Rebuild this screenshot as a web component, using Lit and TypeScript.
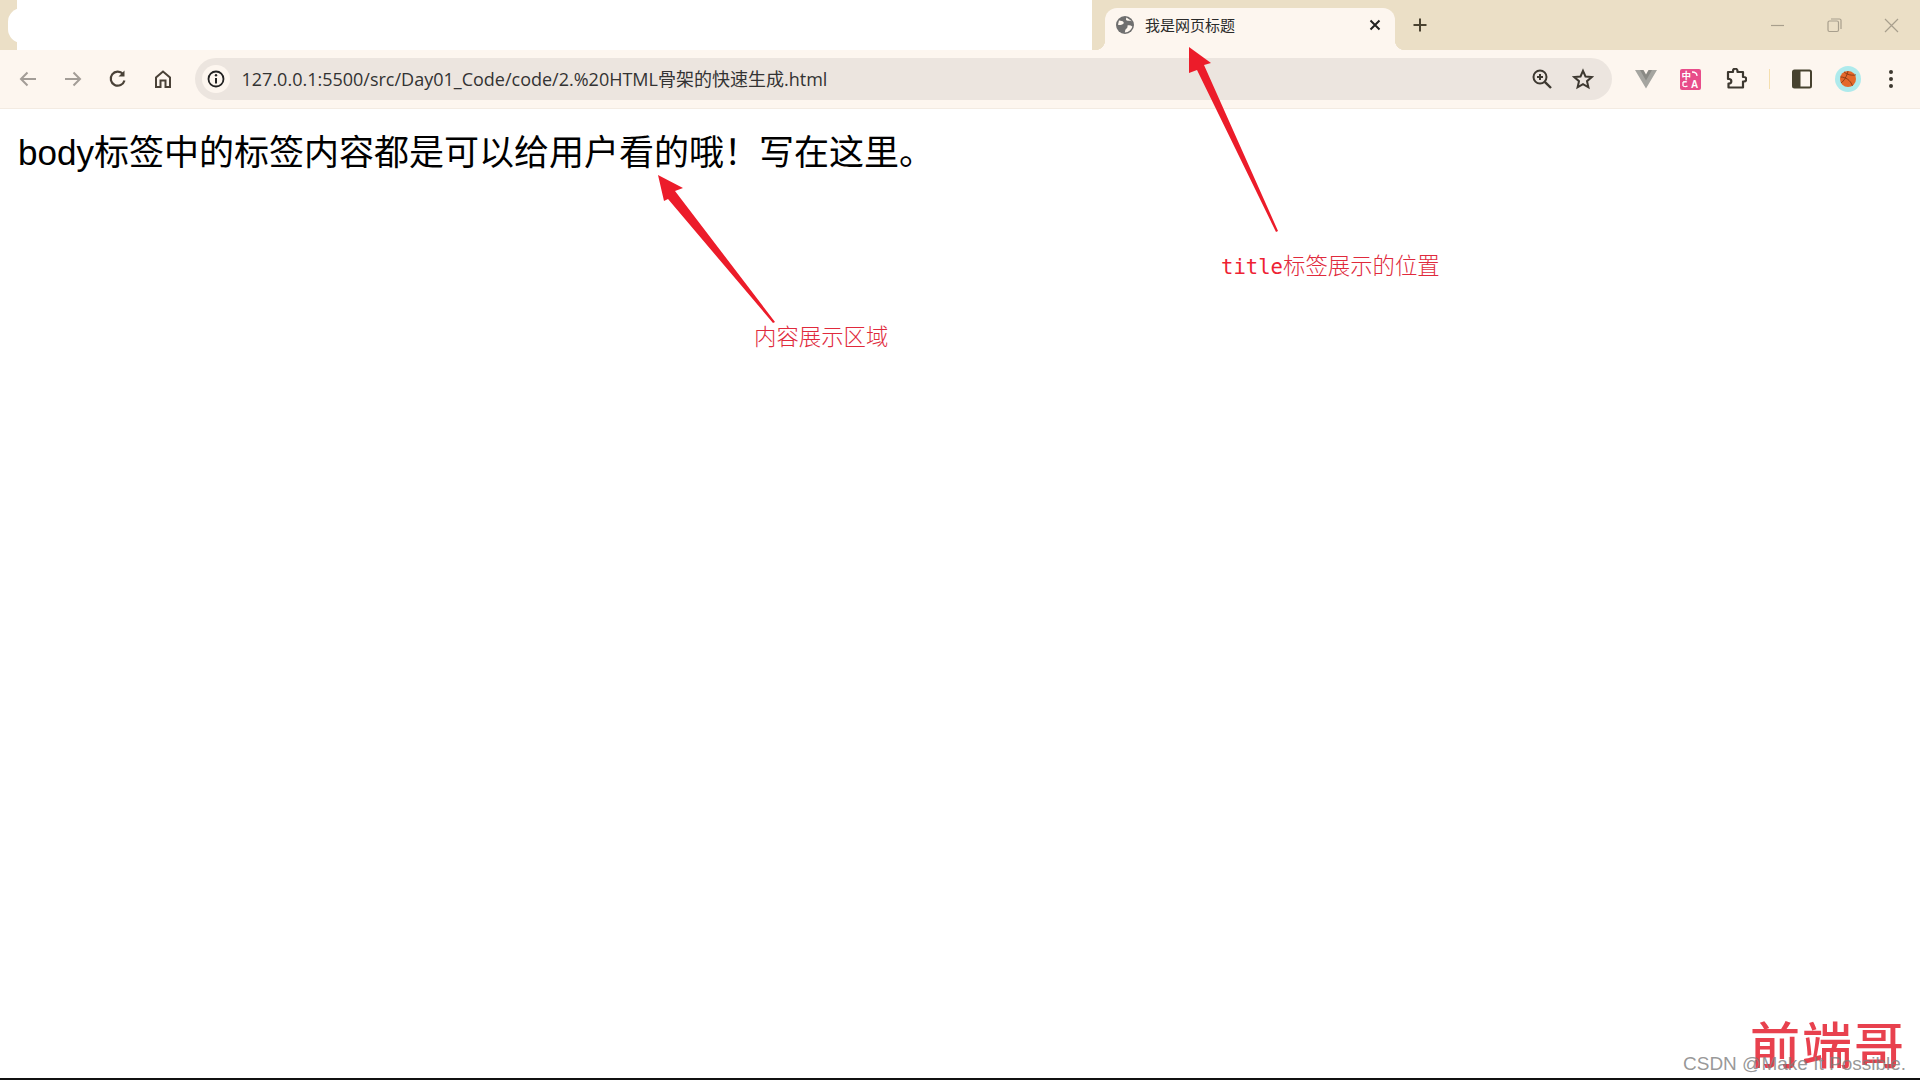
import { LitElement, html, css, svg } from "lit";
import { customElement } from "lit/decorators.js";

@customElement("app-root")
export class AppRoot extends LitElement {
  static styles = css`
    :host { display: block; width: 1920px; height: 1080px; position: relative; overflow: hidden; background: #fff; font-family: "Liberation Sans", "Noto Sans CJK SC", sans-serif; }
    .strip { height: 50px; background: #ebdfc6; display: flex; align-items: stretch; }
    .blank { width: 1075px; margin-left: 17px; background: #fff; flex: none; position: relative; }
    .blank::before { content: ""; position: absolute; left: -9px; top: 8px; width: 24px; height: 35px; background: #fff; border-radius: 14px 0 0 14px; }
    .tabzone { flex: none; width: 13px; }
    .tab { flex: none; width: 290px; margin-top: 8px; background: #fdf6ef; border-radius: 12px 12px 0 0; position: relative; display: flex; align-items: center; padding: 0 12px 8px 11px; box-sizing: border-box; height: 42px; }
    .tab::after { content: ""; position: absolute; right: -10px; bottom: 0; width: 10px; height: 10px; background: radial-gradient(circle at 100% 0, transparent 10px, #fdf6ef 10.5px); }
    .tab::before { content: ""; position: absolute; left: -10px; bottom: 0; width: 10px; height: 10px; background: radial-gradient(circle at 0 0, transparent 10px, #fdf6ef 10.5px); }
    .tab .fav { width: 18px; height: 18px; flex: none; }
    .tab .title { margin-left: 11px; font-size: 15px; line-height: 20px; color: #2a2a2a; flex: 1; font-family: "Noto Sans CJK SC", sans-serif; }
    .tab .x { width: 14px; height: 14px; flex: none; margin-right: 1px; }
    .plus { flex: none; width: 16px; height: 16px; margin: 17px 0 0 17px; }
    .spacer { flex: 1; }
    .winbtns { display: flex; flex: none; align-items: center; gap: 42px; padding-right: 21px; }
    .winbtns svg { width: 15px; height: 15px; flex: none; }
    .bar { height: 59px; box-sizing: border-box; background: #fdf6ef; border-bottom: 1px solid #f3ebe2; display: flex; align-items: center; padding: 0 0 0 18px; }
    .nav { width: 20px; height: 20px; flex: none; margin-right: 25px; }
    .nav:nth-of-type(4) { margin-right: 21.500px; }
    .omni { flex: none; width: 1417px; height: 42px; border-radius: 21px; background: #ece5df; display: flex; align-items: center; padding: 0 0 0 7px; box-sizing: border-box; }
    .info { width: 28px; height: 28px; border-radius: 50%; background: #fdf6ef; flex: none; display: flex; align-items: center; justify-content: center; }
    .info svg { width: 18px; height: 18px; }
    .url { margin: 0 0 2px 12px; font-size: 18px; color: #333; flex: 1; font-family: "Open Sans", "Noto Sans CJK SC", sans-serif; white-space: nowrap; }
    .omni-ico { width: 22px; height: 22px; flex: none; }
    .omni-ico.zoom { margin-right: 19px; }
    .omni-ico.star { margin-right: 18px; }
    .ext { flex: none; display: flex; align-items: center; margin-left: 23px; }
    .ext > * { flex: none; }
    .vue { width: 22px; height: 20px; }
    .tr { width: 21px; height: 21px; margin-left: 23px; }
    .puzzle { width: 22px; height: 22px; margin-left: 24px; }
    .sep { width: 1px; height: 20px; background: #f5dfae; margin-left: 22px; }
    .side { width: 20px; height: 20px; margin-left: 22px; }
    .avatar { width: 26px; height: 26px; margin-left: 23px; }
    .dots { width: 6px; height: 20px; margin-left: 27px; }
    .page { padding: 21px 18px; font-size: 35px; line-height: 46px; color: #000; font-family: "Liberation Sans", "Noto Sans CJK SC", sans-serif; }
    .shot-edge { position: absolute; left: 0; right: 0; bottom: 0; height: 2px; background: #111; }
    .arrows { position: absolute; left: 0; top: 0; width: 1920px; height: 1080px; pointer-events: none; }
    .note { position: absolute; font-size: 22.4px; line-height: 30px; color: #e02a3c; font-family: "Noto Sans CJK SC", sans-serif; font-weight: 300; white-space: nowrap; }
    .note.n1 { left: 754px: top: 320px; left: 754px; top: 320px; }
    .note.n2 { left: 1221px; top: 248.500px; }
    .mono { font-family: "DejaVu Sans Mono", monospace; font-size: 20.6px; color: #ee2233; }
    .wm { position: absolute; left: 1750px; top: 1010px; font-size: 50px; line-height: 64px; letter-spacing: 2px; color: #e8414e; font-family: "Noto Sans CJK SC", sans-serif; font-weight: 500; white-space: nowrap; }
    .csdn { position: absolute; left: 1683px; top: 1053px; font-size: 19px; line-height: 22px; color: rgba(125,125,125,.8); font-family: "Liberation Sans", sans-serif; white-space: nowrap; }
  `;

  render() {
    return html`
      <div class="strip">
        <div class="blank"></div>
        <div class="tabzone"></div>
        <div class="tab">
          <svg class="fav" viewBox="0 0 18 18"><circle cx="9" cy="9" r="9" fill="#6f6f6f"/><path d="M3 4.500c2 .2 3.600.4 4.500 1.600C8.300 7.300 7 8.600 5.500 8.800 4 9 2.600 9.400 2 8.600M10.500 1.500c-.8 1.300-.7 2.500.3 3 1.400.7 3.500.3 5 .7M8.800 16.500c.6-1.500 0-2.600 1.200-3.600 1.300-1.100 2-2 1.300-3.200 1.800-.8 3.600-.2 5 .8-.4 2.600-3.600 6-7.500 6z" fill="#fdf6ef"/></svg>
          <span class="title">我是网页标题</span>
          <svg class="x" viewBox="0 0 14 14"><path d="M2.500 2.500l9 9M11.500 2.500l-9 9" stroke="#222" stroke-width="2" fill="none"/></svg>
        </div>
        <svg class="plus" viewBox="0 0 16 16"><path d="M8 1.500v13M1.500 8h13" stroke="#4a4230" stroke-width="2" fill="none"/></svg>
        <div class="spacer"></div>
        <div class="winbtns">
          <svg viewBox="0 0 15 15"><path d="M1 7.500h13" stroke="#a89f8d" stroke-width="1.200"/></svg>
          <svg viewBox="0 0 15 15" fill="none" stroke="#a89f8d" stroke-width="1.200"><rect x="1" y="3" width="10.500" height="10.500" rx="1.500"/><path d="M4 1h8.500a1.500 1.500 0 0 1 1.500 1.500V11"/></svg>
          <svg viewBox="0 0 15 15"><path d="M1 1l13 13M14 1L1 14" stroke="#a89f8d" stroke-width="1.200"/></svg>
        </div>
      </div>
      <div class="bar">
        <svg class="nav" viewBox="0 0 20 20" fill="none" stroke="#a39d97" stroke-width="2"><path d="M18 10H3M9.500 3.500L3 10l6.500 6.500"/></svg>
        <svg class="nav" viewBox="0 0 20 20" fill="none" stroke="#a39d97" stroke-width="2"><path d="M2 10h15M10.500 3.500L17 10l-6.500 6.500"/></svg>
        <svg class="nav" viewBox="0 0 20 20" fill="none" stroke="#4a4238" stroke-width="2.200"><path d="M16.500 11.500A7 7 0 1 1 15 5"/><path d="M16.500 1.500v6h-6" fill="#4a4238" stroke="none"/></svg>
        <svg class="nav" viewBox="0 0 20 20" fill="none" stroke="#4a4238" stroke-width="2"><path d="M3 18V8.500L10 2.500l7 6V18h-4.500v-6.500h-5V18z"/></svg>
        <div class="omni">
          <div class="info"><svg viewBox="0 0 18 18" fill="none"><circle cx="9" cy="9" r="7.500" stroke="#222" stroke-width="1.800"/><path d="M9 8v5.500" stroke="#222" stroke-width="2"/><circle cx="9" cy="5.300" r="1.200" fill="#222"/></svg></div>
          <span class="url">127.0.0.1:5500/src/Day01_Code/code/2.%20HTML骨架的快速生成.html</span>
          <svg class="omni-ico zoom" viewBox="0 0 22 22" fill="none" stroke="#3d3830" stroke-width="2"><circle cx="9" cy="9" r="6.500"/><path d="M13.800 13.800L20 20" stroke-width="2.400"/><path d="M9 6v6M6 9h6"/></svg>
          <svg class="omni-ico star" viewBox="0 0 22 22" fill="none" stroke="#3d3830" stroke-width="2"><path d="M11 2.800l2.500 5.700 6.200.6-4.700 4.100 1.400 6.100-5.400-3.200-5.400 3.200 1.400-6.100L2.300 9.100l6.200-.6z"/></svg>
        </div>
        <div class="ext">
          <svg class="vue" viewBox="0 0 22 20"><path d="M0 1h6.500L11 8.500 15.500 1H22L11 19.500z" fill="#a5a5a0"/><path d="M5 1h3.500L11 5.500 13.500 1H17l-6 10.500z" fill="#8a8a85"/></svg>
          <svg class="tr" viewBox="0 0 21 21"><rect width="21" height="21" rx="2" fill="#e84d8a"/><text x="1.500" y="10" font-size="9.500" font-weight="700" fill="#fff" font-family="Noto Sans CJK SC, sans-serif">中</text><text x="11" y="19" font-size="10" font-weight="700" fill="#fff" font-family="Liberation Sans, sans-serif">A</text><path d="M3 13c3-.5 3-.5 4 0M3 17c2.500 1 3 1 4.500 0M3 13v4M12 3c3 0 5 1 5 4" stroke="#fff" stroke-width="1.300" fill="none"/></svg>
          <svg class="puzzle" viewBox="0 0 22 22" fill="none" stroke="#3d3830" stroke-width="2.200" stroke-linejoin="round"><path d="M3 4h5V3a2.200 2.200 0 0 1 4.500 0v1H18v5h1a2.200 2.200 0 0 1 0 4.500h-1V19.500H3.500V15.500h1a2.300 2.300 0 0 0 0-4.500h-1.500z"/></svg>
          <div class="sep"></div>
          <svg class="side" viewBox="0 0 20 20"><rect x="1" y="1.500" width="18" height="17" rx="1.500" fill="#fdf6ef" stroke="#47422f" stroke-width="2"/><rect x="1" y="1.500" width="7.500" height="17" fill="#47422f"/></svg>
          <svg class="avatar" viewBox="0 0 26 26"><circle cx="13" cy="13" r="13" fill="#aeeaec"/><circle cx="13" cy="13" r="8" fill="#e4682a"/><path d="M5.500 11c5 0 10 3 12 9M13 5c-1 5-4 10-7 12M9 5.800c3 3 8 4 12 3" stroke="#7a3410" stroke-width=".8" fill="none"/></svg>
          <svg class="dots" viewBox="0 0 6 20"><circle cx="3" cy="3" r="2" fill="#3d3830"/><circle cx="3" cy="10" r="2" fill="#3d3830"/><circle cx="3" cy="17" r="2" fill="#3d3830"/></svg>
        </div>
      </div>
      <div class="page">body标签中的标签内容都是可以给用户看的哦！写在这里。</div>
      <svg class="arrows" viewBox="0 0 1920 1080">
        ${svg`<path d="M1189 47L1211 63 1204 65 1278 231 1276 232 1197 70 1189 73z" fill="#ec1c2a"/>`}
        ${svg`<path d="M658 175L683 188 675 191 775 322 773 323 668 199 664 201z" fill="#ec1c2a"/>`}
      </svg>
      <div class="note n1">内容展示区域</div>
      <div class="note n2"><span class="mono">title</span>标签展示的位置</div>
      <div class="wm">前端哥</div>
      <div class="csdn">CSDN @Make It Possible.</div>
      <div class="shot-edge"></div>
    `;
  }
}
